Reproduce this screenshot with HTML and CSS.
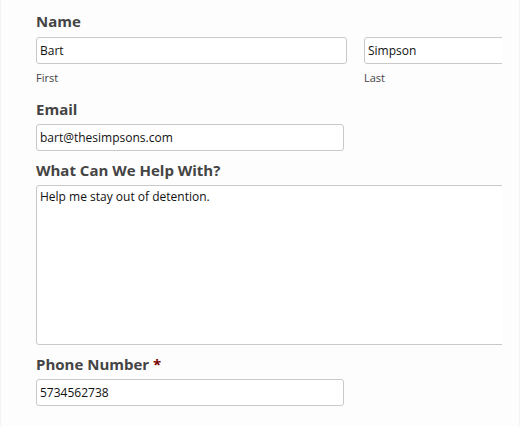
FILE: index.html
```html
<!DOCTYPE html>
<html lang="en">
<head>
  <meta charset="UTF-8">
  <meta name="viewport" content="width=device-width, initial-scale=1.0">
  <title>Contact Form</title>
  <link rel="stylesheet" href="styles.css">
</head>
<body>
  <div class="frame">
    <form class="form">
      <div class="field field-name">
        <label class="field-label">Name</label>
        <div class="name-row">
          <div class="name-part">
            <input type="text" class="input input-first" value="Bart">
            <span class="sub-label">First</span>
          </div>
          <div class="name-part">
            <input type="text" class="input input-last" value="Simpson">
            <span class="sub-label">Last</span>
          </div>
        </div>
      </div>

      <div class="field">
        <label class="field-label" for="email">Email</label>
        <input type="email" id="email" class="input input-medium" value="bart@thesimpsons.com">
      </div>

      <div class="field">
        <label class="field-label" for="message">What Can We Help With?</label>
        <textarea id="message" class="textarea">Help me stay out of detention.</textarea>
      </div>

      <div class="field">
        <label class="field-label" for="phone">Phone Number <span class="required">*</span></label>
        <input type="tel" id="phone" class="input input-medium" value="5734562738">
      </div>
    </form>
  </div>
</body>
</html>
```

FILE: styles.css
```css
body {
  margin: 0;
  background: #fdfdfd;
  font-family: 'Open Sans', sans-serif;
}
.frame {
  height: 426px;
  box-sizing: border-box;
  border-left: 1px solid #f4f4f4;
  border-right: 1px solid #f4f4f4;
  overflow: hidden;
}
.form {
  width: 466px;
  margin-left: 35px;
  padding-top: 11px;
  overflow: hidden;
}
.field {
  margin-bottom: 9px;
}
.field-name {
  margin-bottom: 14px;
}
.field-label {
  display: block;
  font-size: 15px;
  font-weight: 700;
  line-height: 20px;
  color: #444;
  margin-bottom: 5px;
}
.required {
  color: #790000;
}
.name-row {
  display: flex;
  gap: 17px;
  margin-top: 6px;
}
.name-part {
  display: flex;
  flex-direction: column;
  flex: 0 0 auto;
}
.input, .textarea {
  display: block;
  box-sizing: border-box;
  height: 27px;
  padding: 0 3px;
  border: 1px solid #c9c9c9;
  border-radius: 3px;
  background: #fff;
  font-family: 'Open Sans', sans-serif;
  font-size: 12px;
  color: #111;
  outline: none;
}
.input-first {
  width: 311px;
}
.input-last {
  width: 311px;
}
.input-medium {
  width: 308px;
}
.textarea {
  width: 600px;
  height: 160px;
  padding: 3px;
  line-height: 16px;
  resize: none;
}
.sub-label {
  display: block;
  margin-top: 6px;
  font-size: 11px;
  line-height: 15px;
  color: #444;
}
```
